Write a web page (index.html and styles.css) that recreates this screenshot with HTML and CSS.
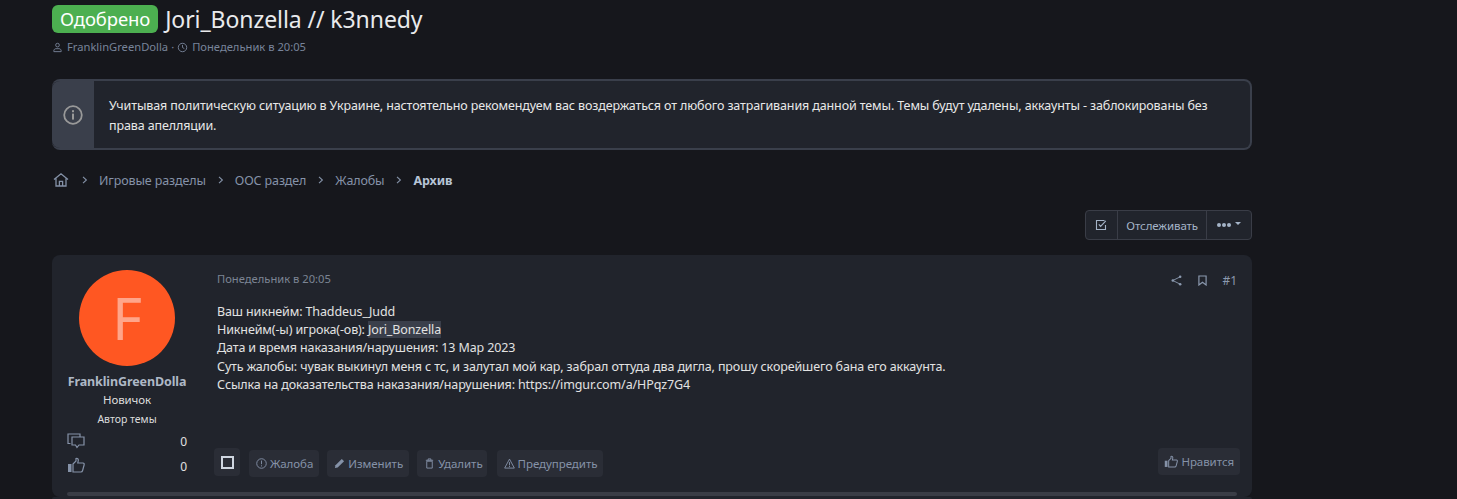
FILE: index.html
```html
<!DOCTYPE html>
<html lang="ru">
<head>
    <meta charset="UTF-8">
    <title>Jori_Bonzella // k3nnedy</title>
    <link rel="stylesheet" href="styles.css">
</head>
<body>
    <div class="wrap">
        <h1 class="title"><span class="badge">Одобрено</span> Jori_Bonzella // k3nnedy</h1>
        <div class="meta">
            <svg class="meta-icon" viewBox="0 0 12 12"><circle cx="6" cy="3.4" r="2" fill="none" stroke="currentColor"/><path d="M2 10.5v-1c0-1.3 1.2-2.2 2.400-2.200h3.200c1.200 0 2.400.9 2.400 2.200v1z" fill="none" stroke="currentColor"/></svg>
            <span>FranklinGreenDolla</span>
            <span>·</span>
            <svg class="meta-icon" viewBox="0 0 12 12"><circle cx="6" cy="6" r="4.6" fill="none" stroke="currentColor"/><path d="M6 3.2V6l2 1.2" fill="none" stroke="currentColor"/></svg>
            <span>Понедельник в 20:05</span>
        </div>

        <div class="notice">
            <div class="notice-side">
                <svg viewBox="0 0 20 20" width="20" height="20"><circle cx="10" cy="10" r="8.8" fill="none" stroke="currentColor" stroke-width="1.8"/><rect x="9" y="8.6" width="2" height="6" fill="currentColor"/><rect x="9" y="5.2" width="2" height="2" fill="currentColor"/></svg>
            </div>
            <div class="notice-text">Учитывая политическую ситуацию в Украине, настоятельно рекомендуем вас воздержаться от любого затрагивания данной темы. Темы будут удалены, аккаунты - заблокированы без права апелляции.</div>
        </div>

        <nav class="crumbs">
            <svg class="home" viewBox="0 0 16 16"><path d="M1 7.600 8 1.800l7 5.800M3 6.400V14h10V6.400M6.400 14V9.400h3.200V14" fill="none" stroke="currentColor" stroke-width="1.300"/></svg>
            <svg class="sep" viewBox="0 0 6 8"><path d="M1 .8 4.400 4 1 7.200" fill="none" stroke="currentColor" stroke-width="1.100"/></svg><a>Игровые разделы</a>
            <svg class="sep" viewBox="0 0 6 8"><path d="M1 .8 4.400 4 1 7.200" fill="none" stroke="currentColor" stroke-width="1.100"/></svg><a>ООС раздел</a>
            <svg class="sep" viewBox="0 0 6 8"><path d="M1 .8 4.400 4 1 7.200" fill="none" stroke="currentColor" stroke-width="1.100"/></svg><a>Жалобы</a>
            <svg class="sep" viewBox="0 0 6 8"><path d="M1 .8 4.400 4 1 7.200" fill="none" stroke="currentColor" stroke-width="1.100"/></svg><b>Архив</b>
        </nav>

        <div class="tools">
            <div class="btn-group">
                <span class="tool tool-icon"><svg viewBox="0 0 12 12" width="12" height="12"><path d="M10.500 6v4.500h-9v-9h8M3.800 5.400 5.600 7.400 10.800 1.800" fill="none" stroke="currentColor" stroke-width="1.100"/></svg></span>
                <span class="tool">Отслеживать</span>
                <span class="tool tool-more"><span class="dot"></span><span class="dot"></span><span class="dot"></span><span class="caret"></span></span>
            </div>
        </div>

        <article class="post">
            <aside class="user">
                <div class="avatar">F</div>
                <div class="username">FranklinGreenDolla</div>
                <div class="rank">Новичок</div>
                <div class="author">Автор темы</div>
                <div class="stats">
                    <div class="stat">
                        <svg viewBox="0 0 18 16" width="18" height="16"><path d="M3.500 10.500H1V1h12v2.500M5 4h12v8h-5l-2 2.500L8.500 12H5z" fill="none" stroke="currentColor" stroke-width="1.200"/></svg>
                        <span>0</span>
                    </div>
                    <div class="stat stat-likes">
                        <svg viewBox="0 0 18 16" width="18" height="16"><path d="M1 7h3.500v8H1z" fill="currentColor"/><path d="M6 7l3-3V1.500c1.500-.6 2.500.5 2.300 2L10.800 6H16c1 0 1.400 1 1.100 2l-1.500 5.500c-.2.800-.8 1.500-1.700 1.500H6z" fill="none" stroke="currentColor" stroke-width="1.200"/></svg>
                        <span>0</span>
                    </div>
                </div>
            </aside>
            <div class="body">
                <div class="post-head">
                    <span class="post-date">Понедельник в 20:05</span>
                    <div class="post-links">
                        <svg viewBox="0 0 12 12" width="11" height="11"><circle cx="10" cy="2" r="1.400" fill="currentColor"/><circle cx="2" cy="6" r="1.400" fill="currentColor"/><circle cx="10" cy="10" r="1.400" fill="currentColor"/><path d="M10 2 2 6l8 4" fill="none" stroke="currentColor"/></svg>
                        <svg viewBox="0 0 10 12" width="9" height="11"><path d="M1 1h8v10L5 8l-4 3z" fill="none" stroke="currentColor" stroke-width="1.300"/></svg>
                        <span>#1</span>
                    </div>
                </div>
                <div class="post-text">
                    Ваш никнейм: Thaddeus_Judd<br>
                    Никнейм(-ы) игрока(-ов): <span class="hl">Jori_Bonzella</span><br>
                    Дата и время наказания/нарушения: 13 Мар 2023<br>
                    Суть жалобы: чувак выкинул меня с тс, и залутал мой кар, забрал оттуда два дигла, прошу скорейшего бана его аккаунта.<br>
                    Ссылка на доказательства наказания/нарушения: https://imgur.com/a/HPqz7G4
                </div>
                <div class="actions">
                    <span class="check"><span class="check-box"></span></span>
                    <span class="act"><svg viewBox="0 0 12 12" width="11" height="11"><circle cx="6" cy="6" r="5.200" fill="none" stroke="currentColor"/><path d="M6 2.800v4M6 8v1.200" stroke="currentColor" fill="none"/></svg>Жалоба</span>
                    <span class="act"><svg viewBox="0 0 12 12" width="11" height="11"><path d="M1 11l.6-3L8.500 1l2.500 2.500L4 10.400z" fill="currentColor"/></svg>Изменить</span>
                    <span class="act act-delete"><svg viewBox="0 0 12 12" width="11" height="11"><path d="M2 2.500h8M4.500 2.500V1h3v1.500M3 3.500h6V11H3z" fill="none" stroke="currentColor"/></svg>Удалить</span>
                    <span class="act"><svg viewBox="0 0 12 12" width="11" height="11"><path d="M6 1.200 11.300 11H.7zM6 4.500V8M6 8.800V10" fill="none" stroke="currentColor"/></svg>Предупредить</span>
                    <span class="act act-like"><svg viewBox="0 0 18 16" width="14" height="13"><path d="M1 7h3.500v8H1z" fill="currentColor"/><path d="M6 7l3-3V1.500c1.500-.6 2.500.5 2.300 2L10.800 6H16c1 0 1.400 1 1.100 2l-1.500 5.500c-.2.800-.8 1.500-1.700 1.500H6z" fill="none" stroke="currentColor" stroke-width="1.300"/></svg>Нравится</span>
                </div>
            </div>
            <div class="bottom-bar"></div>
        </article>
        <div class="next-post"></div>
    </div>
</body>
</html>
```

FILE: styles.css
```css
body {
    margin: 0;
    background-color: #16171c;
    color: #e8e8e8;
    font-family: "Noto Sans", Arial, sans-serif;
    font-size: 12.5px;
    letter-spacing: -0.12px;
}
svg {
    flex: none;
}
.wrap {
    width: 1200px;
    margin-left: 52px;
    padding-top: 5px;
}
.title {
    display: flex;
    align-items: center;
    gap: 7px;
    margin: 0;
    font-size: 23px;
    font-weight: 400;
    line-height: 28px;
    letter-spacing: -0.08px;
    color: #e9eaec;
}
.badge {
    padding: 0 8px;
    background-color: #4caf50;
    border-radius: 6px;
    font-size: 18.500px;
    letter-spacing: -0.1px;
    color: #fff;
}
.meta {
    display: flex;
    align-items: center;
    gap: 3px;
    margin-top: 7px;
    font-size: 11.200px;
    line-height: 14px;
    letter-spacing: 0;
    color: #78849a;
}
.meta-icon {
    width: 11px;
    height: 11px;
    margin-right: 1px;
}
.notice {
    display: flex;
    height: 71px;
    margin-top: 25px;
    box-sizing: border-box;
    background-color: #21242c;
    border: 2px solid #3a3f4b;
    border-left: 0;
    border-radius: 8px;
}
.notice-side {
    display: flex;
    align-items: center;
    justify-content: center;
    width: 42px;
    background-color: #3a3f4b;
    border-radius: 8px 0 0 8px;
    color: #999;
}
.notice-text {
    flex: 1;
    align-self: center;
    padding: 2px 15px 0;
    line-height: 20px;
    color: #e8e8e8;
}
.crumbs {
    display: flex;
    align-items: center;
    height: 20px;
    margin-top: 20px;
    color: #8592a8;
}
.home {
    width: 16px;
    height: 16px;
    margin: 0 1px;
}
.sep {
    width: 6px;
    height: 8px;
    margin: 0 11px 0 12px;
}
.crumbs b {
    color: #b6c4d6;
}
.tools {
    display: flex;
    justify-content: flex-end;
    margin-top: 20px;
}
.btn-group {
    display: flex;
    height: 30px;
    box-sizing: border-box;
    background-color: #21242c;
    border: 1px solid #3a3d47;
    border-radius: 4px;
    font-size: 11.500px;
    letter-spacing: -0.1px;
    color: #a5b4c8;
}
.tool {
    display: flex;
    align-items: center;
    padding: 0 8px;
    border-left: 1px solid #3a3d47;
}
.tool-icon {
    padding: 0 10px 0 9px;
    border-left: 0;
}
.tool-more {
    gap: 1px;
    padding: 0 10px;
}
.dot {
    width: 4px;
    height: 4px;
    background-color: #a5b4c8;
    border-radius: 50%;
}
.caret {
    margin: -3px 0 0 3px;
    border: 3.500px solid transparent;
    border-top-color: #a5b4c8;
    border-bottom: 0;
}
.post {
    position: relative;
    display: flex;
    height: 242px;
    margin-top: 15px;
    background-color: #21242c;
    border-radius: 8px;
}
.next-post {
    height: 2px;
    background-color: #21242c;
    border-radius: 2px 2px 0 0;
}
.user {
    width: 150px;
    padding: 15px 15px 0;
    box-sizing: border-box;
    text-align: center;
}
.avatar {
    width: 96px;
    height: 96px;
    margin: 0 auto;
    background-color: #ff5722;
    border-radius: 50%;
    color: #ffa58a;
    font-size: 58px;
    line-height: 96px;
}
.username {
    margin-top: 7px;
    font-size: 12.500px;
    font-weight: 700;
    letter-spacing: -0.1px;
    color: #aeb8c6;
}
.rank {
    margin-top: 2px;
    font-size: 11.500px;
    color: #dcdcdc;
}
.author {
    margin-top: 5px;
    font-size: 10.500px;
    letter-spacing: 0;
    color: #dcdcdc;
}
.stats {
    margin-top: 3px;
}
.stat {
    display: flex;
    align-items: center;
    justify-content: space-between;
    height: 25px;
    color: #8592a8;
}
.stat svg {
    margin-bottom: 2px;
}
.stat-likes svg {
    margin-bottom: 4px;
}
.stat span {
    color: #e0e0e0;
    font-size: 12px;
}
.body {
    flex: 1;
    padding: 16px 15px 0;
}
.post-head {
    display: flex;
    justify-content: space-between;
    font-size: 11.200px;
    letter-spacing: 0;
    color: #7c8494;
}
.post-links {
    display: flex;
    align-items: center;
    gap: 15px;
    margin-top: 1px;
    color: #8b99af;
    font-size: 12px;
}
.post-links svg:first-child {
    margin-right: 1px;
}
.post-text {
    margin-top: 14px;
    line-height: 18.200px;
    color: #e2e2e2;
}
.hl {
    background-color: #3a3f4b;
}
.actions {
    display: flex;
    align-items: flex-start;
    margin: 54px -3px 0;
    font-size: 11.500px;
    letter-spacing: -0.05px;
    color: #8592a8;
}
.check {
    display: flex;
    align-items: center;
    justify-content: center;
    width: 26px;
    height: 28px;
    margin-right: 1px;
    background-color: #2a2d36;
    border-radius: 4px;
}
.check-box {
    width: 9px;
    height: 9px;
    border: 2px solid #cfd6e0;
}
.act {
    display: flex;
    align-items: center;
    gap: 3px;
    height: 27px;
    margin: 2px 0 0 8px;
    padding: 0 6px 0 7px;
    background-color: #2a2d36;
    border-radius: 4px;
}
.act-delete {
    padding-right: 4px;
    margin-right: 2px;
}
.act-like {
    margin: 0 0 0 auto;
    padding: 0 6px;
}
.bottom-bar {
    position: absolute;
    left: 15px;
    right: 15px;
    top: 237px;
    height: 4px;
    background-color: #3a3d46;
    border-radius: 2px;
}
```
